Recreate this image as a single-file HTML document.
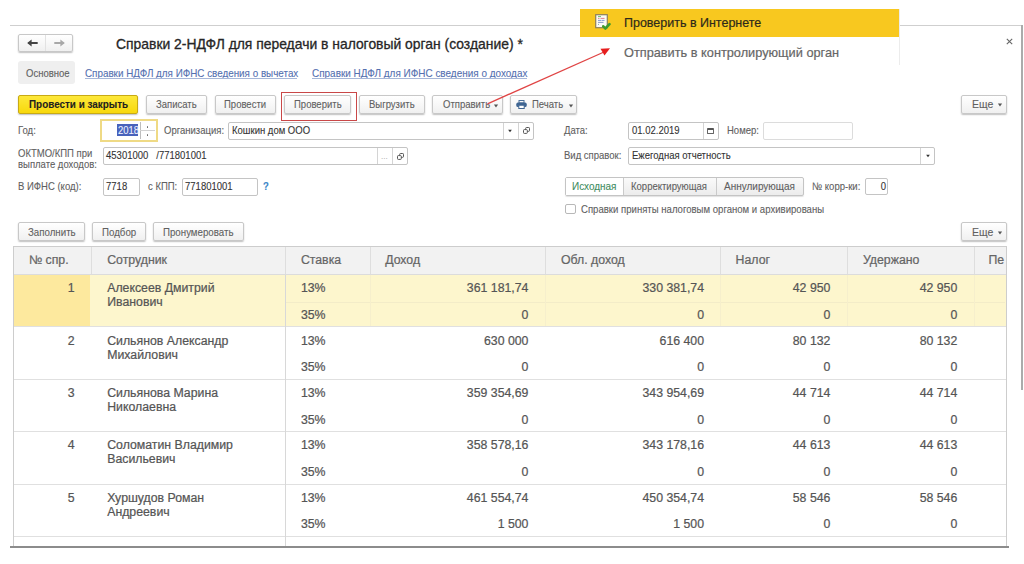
<!DOCTYPE html>
<html><head><meta charset="utf-8">
<style>
*{box-sizing:border-box;margin:0;padding:0}
html,body{width:1024px;height:564px;overflow:hidden;background:#fff}
body{position:relative;font-family:"Liberation Sans",sans-serif;color:#444}
.a{position:absolute}
.t{position:absolute;white-space:nowrap;line-height:1;-webkit-text-stroke:0.1px currentColor}
</style></head><body>

<div class="a" style="left:10.00px;top:25.00px;width:1012.00px;height:1.00px;background:#cfcfcf"></div>
<div class="a" style="left:1021.00px;top:25.00px;width:1.50px;height:365.00px;background:#ababab"></div>
<svg class="a" style="left:1005.5px;top:38px" width="7" height="7" viewBox="0 0 7 7"><path d="M0.8 0.8L6.2 6.2M6.2 0.8L0.8 6.2" stroke="#666" stroke-width="1.1"/></svg>
<div class="a" style="left:18.00px;top:34.30px;width:54.90px;height:17.90px;border:1px solid #c8c8c8;border-radius:2px;background:linear-gradient(#fff,#f0f0f0);box-shadow:0 1px 1.5px rgba(0,0,0,.25);"></div>
<div class="a" style="left:45.20px;top:35.30px;width:1.00px;height:15.70px;background:#e2e2e2"></div>
<svg class="a" style="left:27px;top:39.3px" width="11" height="8" viewBox="0 0 11 8"><path d="M2 4H10" stroke="#444" stroke-width="1.9" stroke-linecap="round"/><path d="M0.2 4L4.6 0.4V7.6Z" fill="#444"/></svg>
<svg class="a" style="left:53.5px;top:39.3px" width="11" height="8" viewBox="0 0 11 8"><path d="M1 4H9" stroke="#a8a8a8" stroke-width="1.9" stroke-linecap="round"/><path d="M10.8 4L6.4 0.4V7.6Z" fill="#a8a8a8"/></svg>
<div class="t" style="left:116.00px;top:37.83px;font-size:13.9px;color:#262626;font-weight:400;-webkit-text-stroke:0.3px #262626">Справки 2-НДФЛ для передачи в налоговый орган (создание) *</div>
<div class="a" style="left:18.10px;top:61.00px;width:57.40px;height:23.20px;background:#efefef;border-radius:3px"></div>
<div class="t" style="left:25.50px;top:67.79px;font-size:11.0px;color:#606060;font-weight:400;transform:scaleX(0.865);transform-origin:0 0;">Основное</div>
<div class="t" style="left:84.70px;top:67.79px;font-size:11.0px;color:#5470b0;font-weight:400;transform:scaleX(0.8950473684210527);transform-origin:0 0;">Справки НДФЛ для ИФНС сведения о вычетах</div>
<div class="a" style="left:84.70px;top:78.20px;width:212.30px;height:1.00px;background:#a6b6d8"></div>
<div class="t" style="left:312.00px;top:67.79px;font-size:11.0px;color:#5470b0;font-weight:400;transform:scaleX(0.9041526315789473);transform-origin:0 0;">Справки НДФЛ для ИФНС сведения о доходах</div>
<div class="a" style="left:312.00px;top:78.20px;width:215.00px;height:1.00px;background:#a6b6d8"></div>
<div class="a" style="left:17.80px;top:95.30px;width:120.30px;height:18.40px;border:1px solid #c8aa14;border-radius:2px;background:linear-gradient(#fde83a,#f8d80c);box-shadow:0 1px 1.5px rgba(0,0,0,.25)"></div>
<div class="t" style="left:28.70px;top:99.29px;font-size:11.0px;color:#1e1e1e;font-weight:700;transform:scaleX(0.8986894736842105);transform-origin:0 0;">Провести и закрыть</div>
<div class="a" style="left:145.50px;top:95.30px;width:61.20px;height:18.40px;border:1px solid #c8c8c8;border-radius:2px;background:linear-gradient(#fff,#f0f0f0);box-shadow:0 1px 1.5px rgba(0,0,0,.25);"></div>
<div class="t" style="left:155.70px;top:99.29px;font-size:11.0px;color:#606060;font-weight:400;transform:scaleX(0.865);transform-origin:0 0;">Записать</div>
<div class="a" style="left:214.50px;top:95.30px;width:61.50px;height:18.40px;border:1px solid #c8c8c8;border-radius:2px;background:linear-gradient(#fff,#f0f0f0);box-shadow:0 1px 1.5px rgba(0,0,0,.25);"></div>
<div class="t" style="left:224.00px;top:99.29px;font-size:11.0px;color:#606060;font-weight:400;transform:scaleX(0.865);transform-origin:0 0;">Провести</div>
<div class="a" style="left:283.70px;top:95.30px;width:67.20px;height:18.40px;border:1px solid #c8c8c8;border-radius:2px;background:linear-gradient(#fff,#f0f0f0);box-shadow:0 1px 1.5px rgba(0,0,0,.25);"></div>
<div class="t" style="left:293.50px;top:99.29px;font-size:11.0px;color:#606060;font-weight:400;transform:scaleX(0.865);transform-origin:0 0;">Проверить</div>
<div class="a" style="left:358.80px;top:95.30px;width:65.90px;height:18.40px;border:1px solid #c8c8c8;border-radius:2px;background:linear-gradient(#fff,#f0f0f0);box-shadow:0 1px 1.5px rgba(0,0,0,.25);"></div>
<div class="t" style="left:368.50px;top:99.29px;font-size:11.0px;color:#606060;font-weight:400;transform:scaleX(0.865);transform-origin:0 0;">Выгрузить</div>
<div class="a" style="left:432.30px;top:95.30px;width:70.30px;height:18.40px;border:1px solid #c8c8c8;border-radius:2px;background:linear-gradient(#fff,#f0f0f0);box-shadow:0 1px 1.5px rgba(0,0,0,.25);"></div>
<div class="t" style="left:443.00px;top:99.29px;font-size:11.0px;color:#606060;font-weight:400;transform:scaleX(0.865);transform-origin:0 0;">Отправить</div>
<svg class="a" style="left:491.50px;top:101.50px" width="8" height="8" viewBox="0 0 8 8"><path d="M1.90 2.60H6.10L4 5.40Z" fill="#555"/></svg>
<div class="a" style="left:510.00px;top:95.30px;width:67.30px;height:18.40px;border:1px solid #c8c8c8;border-radius:2px;background:linear-gradient(#fff,#f0f0f0);box-shadow:0 1px 1.5px rgba(0,0,0,.25);"></div>
<svg class="a" style="left:515.5px;top:100.2px" width="11" height="9" viewBox="0 0 11 9"><rect x="3" y="0.5" width="5" height="2.5" fill="none" stroke="#4a6f99" stroke-width="1"/><rect x="0.3" y="2.6" width="10.4" height="4.4" rx="1.6" fill="#3f6592"/><rect x="2.8" y="5.2" width="5.4" height="3.3" fill="#fff" stroke="#3f6592" stroke-width="1"/></svg>
<div class="t" style="left:532.00px;top:99.29px;font-size:11.0px;color:#606060;font-weight:400;transform:scaleX(0.865);transform-origin:0 0;">Печать</div>
<svg class="a" style="left:566.50px;top:101.50px" width="8" height="8" viewBox="0 0 8 8"><path d="M1.90 2.60H6.10L4 5.40Z" fill="#555"/></svg>
<div class="a" style="left:961.00px;top:95.00px;width:45.80px;height:19.30px;border:1px solid #c8c8c8;border-radius:2px;background:linear-gradient(#fff,#f0f0f0);box-shadow:0 1px 1.5px rgba(0,0,0,.25);"></div>
<div class="t" style="left:972.00px;top:99.29px;font-size:11.0px;color:#606060;font-weight:400;transform:scaleX(0.9515);transform-origin:0 0;">Еще</div>
<svg class="a" style="left:996.00px;top:101.40px" width="8" height="8" viewBox="0 0 8 8"><path d="M1.90 2.60H6.10L4 5.40Z" fill="#555"/></svg>
<div class="a" style="left:280.50px;top:92.00px;width:76.50px;height:29.30px;border:1.5px solid #c94848"></div>
<div class="t" style="left:17.80px;top:125.39px;font-size:11.0px;color:#606060;font-weight:400;transform:scaleX(0.865);transform-origin:0 0;">Год:</div>
<div class="a" style="left:100.00px;top:119.30px;width:58.00px;height:22.70px;border:2px solid #efda85;background:#fff"></div>
<div class="a" style="left:117.30px;top:124.40px;width:20.50px;height:11.70px;background:#4862bb"></div>
<div class="t" style="left:117.60px;top:125.39px;font-size:11.0px;color:#eef0ff;font-weight:400;transform:scaleX(0.86);transform-origin:0 0;">2018</div>
<div class="a" style="left:139.80px;top:122.40px;width:1.00px;height:16.40px;background:#bdbdbd"></div>
<div class="a" style="left:140.30px;top:130.10px;width:14.90px;height:1.00px;background:#d2d2d2"></div>
<div class="a" style="left:146.70px;top:125.90px;width:1.70px;height:1.70px;background:#666;border-radius:1px"></div>
<div class="a" style="left:146.70px;top:134.10px;width:1.70px;height:1.70px;background:#666;border-radius:1px"></div>
<div class="t" style="left:164.00px;top:125.39px;font-size:11.0px;color:#606060;font-weight:400;transform:scaleX(0.865);transform-origin:0 0;">Организация:</div>
<div class="a" style="left:228.00px;top:121.70px;width:306.40px;height:17.90px;border:1px solid #c4c4c4;border-radius:2px;background:#fff;"></div>
<div class="a" style="left:502.60px;top:122.80px;width:1.00px;height:16.20px;background:#d4d4d4"></div>
<div class="a" style="left:518.20px;top:122.80px;width:1.00px;height:16.20px;background:#d4d4d4"></div>
<div class="t" style="left:231.50px;top:125.39px;font-size:11.0px;color:#333;font-weight:400;transform:scaleX(0.865);transform-origin:0 0;">Кошкин дом ООО</div>
<svg class="a" style="left:506.20px;top:126.80px" width="8" height="8" viewBox="0 0 8 8"><path d="M2.10 2.70H5.90L4 5.30Z" fill="#333"/></svg>
<svg class="a" style="left:523.2px;top:127.4px" width="7" height="7" viewBox="0 0 7 7"><rect x="2.7" y="0.5" width="3.8" height="3.8" rx="0.8" fill="none" stroke="#555" stroke-width="1"/><rect x="0.5" y="2.6" width="3.8" height="3.8" rx="0.8" fill="#fff" stroke="#555" stroke-width="1"/></svg>
<div class="t" style="left:17.80px;top:148.29px;font-size:11.0px;color:#606060;font-weight:400;transform:scaleX(0.865);transform-origin:0 0;">ОКТМО/КПП при</div>
<div class="t" style="left:17.80px;top:159.09px;font-size:11.0px;color:#606060;font-weight:400;transform:scaleX(0.865);transform-origin:0 0;">выплате доходов:</div>
<div class="a" style="left:102.50px;top:147.20px;width:305.90px;height:17.60px;border:1px solid #c4c4c4;border-radius:2px;background:#fff;"></div>
<div class="a" style="left:376.60px;top:148.20px;width:1.00px;height:15.60px;background:#d4d4d4"></div>
<div class="a" style="left:392.20px;top:148.20px;width:1.00px;height:15.60px;background:#d4d4d4"></div>
<div class="t" style="left:105.50px;top:150.39px;font-size:11.0px;color:#333;font-weight:400;transform:scaleX(0.865);transform-origin:0 0;">45301000&nbsp;&nbsp;&nbsp;/771801001</div>
<div class="t" style="left:381.00px;top:152.53px;font-size:8px;color:#aaa;font-weight:400;">...</div>
<svg class="a" style="left:397.3px;top:152.6px" width="7" height="7" viewBox="0 0 7 7"><rect x="2.7" y="0.5" width="3.8" height="3.8" rx="0.8" fill="none" stroke="#555" stroke-width="1"/><rect x="0.5" y="2.6" width="3.8" height="3.8" rx="0.8" fill="#fff" stroke="#555" stroke-width="1"/></svg>
<div class="t" style="left:17.80px;top:180.79px;font-size:11.0px;color:#606060;font-weight:400;transform:scaleX(0.865);transform-origin:0 0;">В ИФНС (код):</div>
<div class="a" style="left:102.50px;top:177.50px;width:37.50px;height:18.00px;border:1px solid #c4c4c4;border-radius:2px;background:#fff;"></div>
<div class="t" style="left:105.50px;top:180.79px;font-size:11.0px;color:#333;font-weight:400;transform:scaleX(0.865);transform-origin:0 0;">7718</div>
<div class="t" style="left:148.00px;top:180.79px;font-size:11.0px;color:#606060;font-weight:400;transform:scaleX(0.865);transform-origin:0 0;">с КПП:</div>
<div class="a" style="left:182.00px;top:177.50px;width:75.80px;height:18.00px;border:1px solid #c4c4c4;border-radius:2px;background:#fff;"></div>
<div class="t" style="left:185.30px;top:180.79px;font-size:11.0px;color:#333;font-weight:400;transform:scaleX(0.865);transform-origin:0 0;">771801001</div>
<div class="t" style="left:262.50px;top:180.79px;font-size:11.0px;color:#3a86c8;font-weight:700;transform:scaleX(0.865);transform-origin:0 0;">?</div>
<div class="t" style="left:564.40px;top:125.39px;font-size:11.0px;color:#606060;font-weight:400;transform:scaleX(0.865);transform-origin:0 0;">Дата:</div>
<div class="a" style="left:628.20px;top:121.80px;width:90.50px;height:18.20px;border:1px solid #c4c4c4;border-radius:2px;background:#fff;"></div>
<div class="a" style="left:703.40px;top:122.80px;width:1.00px;height:16.20px;background:#d4d4d4"></div>
<div class="t" style="left:631.50px;top:125.39px;font-size:11.0px;color:#333;font-weight:400;transform:scaleX(0.865);transform-origin:0 0;">01.02.2019</div>
<div class="a" style="left:707.40px;top:128.20px;width:7.00px;height:6.00px;border:1px solid #666;border-top:2px solid #555;border-radius:1px"></div>
<div class="t" style="left:726.90px;top:125.39px;font-size:11.0px;color:#606060;font-weight:400;transform:scaleX(0.865);transform-origin:0 0;">Номер:</div>
<div class="a" style="left:762.70px;top:121.60px;width:90.20px;height:18.00px;border:1px solid #c4c4c4;border-radius:2px;background:#fff;border-color:#dcdcdc"></div>
<div class="t" style="left:564.40px;top:150.09px;font-size:11.0px;color:#606060;font-weight:400;transform:scaleX(0.865);transform-origin:0 0;">Вид справок:</div>
<div class="a" style="left:628.20px;top:147.00px;width:306.80px;height:18.20px;border:1px solid #c4c4c4;border-radius:2px;background:#fff;"></div>
<div class="a" style="left:920.40px;top:148.00px;width:1.00px;height:16.20px;background:#d4d4d4"></div>
<div class="t" style="left:631.50px;top:150.09px;font-size:11.0px;color:#333;font-weight:400;transform:scaleX(0.865);transform-origin:0 0;">Ежегодная отчетность</div>
<svg class="a" style="left:923.70px;top:152.00px" width="8" height="8" viewBox="0 0 8 8"><path d="M2.10 2.70H5.90L4 5.30Z" fill="#333"/></svg>
<div class="a" style="left:564.50px;top:177.40px;width:239.40px;height:18.90px;border:1px solid #c4c4c4;border-radius:2px;background:linear-gradient(#fafafa,#ececec);box-shadow:0 1px 1px rgba(0,0,0,.12)"></div>
<div class="a" style="left:565.50px;top:178.40px;width:57.80px;height:16.90px;background:#fff"></div>
<div class="a" style="left:623.30px;top:178.40px;width:1.00px;height:16.90px;background:#cacaca"></div>
<div class="a" style="left:716.00px;top:178.40px;width:1.00px;height:16.90px;background:#cacaca"></div>
<div class="t" style="left:571.70px;top:180.89px;font-size:11.0px;color:#3e8c5e;font-weight:400;transform:scaleX(0.9032421052631578);transform-origin:0 0;">Исходная</div>
<div class="t" style="left:630.50px;top:180.89px;font-size:11.0px;color:#606060;font-weight:400;transform:scaleX(0.865);transform-origin:0 0;">Корректирующая</div>
<div class="t" style="left:724.20px;top:180.89px;font-size:11.0px;color:#606060;font-weight:400;transform:scaleX(0.90825);transform-origin:0 0;">Аннулирующая</div>
<div class="t" style="left:812.30px;top:180.89px;font-size:11.0px;color:#606060;font-weight:400;transform:scaleX(0.865);transform-origin:0 0;">№ корр-ки:</div>
<div class="a" style="left:865.00px;top:177.80px;width:23.00px;height:17.60px;border:1px solid #c4c4c4;border-radius:2px;background:#fff;"></div>
<div class="t" style="right:138.00px;top:180.89px;font-size:11.0px;color:#333;font-weight:400;transform:scaleX(0.865);transform-origin:100% 0;">0</div>
<div class="a" style="left:565.20px;top:203.60px;width:11.30px;height:10.90px;border:1px solid #b8b8b8;border-radius:2px;background:#fff"></div>
<div class="t" style="left:581.40px;top:203.69px;font-size:11.0px;color:#606060;font-weight:400;transform:scaleX(0.8704631578947369);transform-origin:0 0;">Справки приняты налоговым органом и архивированы</div>
<div class="a" style="left:18.30px;top:222.30px;width:66.50px;height:19.20px;border:1px solid #c8c8c8;border-radius:2px;background:linear-gradient(#fff,#f0f0f0);box-shadow:0 1px 1.5px rgba(0,0,0,.25);"></div>
<div class="t" style="left:28.40px;top:227.29px;font-size:11.0px;color:#606060;font-weight:400;transform:scaleX(0.8823);transform-origin:0 0;">Заполнить</div>
<div class="a" style="left:92.00px;top:222.30px;width:54.30px;height:19.20px;border:1px solid #c8c8c8;border-radius:2px;background:linear-gradient(#fff,#f0f0f0);box-shadow:0 1px 1.5px rgba(0,0,0,.25);"></div>
<div class="t" style="left:101.80px;top:227.29px;font-size:11.0px;color:#606060;font-weight:400;transform:scaleX(0.8823);transform-origin:0 0;">Подбор</div>
<div class="a" style="left:153.30px;top:222.30px;width:90.70px;height:19.20px;border:1px solid #c8c8c8;border-radius:2px;background:linear-gradient(#fff,#f0f0f0);box-shadow:0 1px 1.5px rgba(0,0,0,.25);"></div>
<div class="t" style="left:163.20px;top:227.29px;font-size:11.0px;color:#606060;font-weight:400;transform:scaleX(0.8823);transform-origin:0 0;">Пронумеровать</div>
<div class="a" style="left:961.00px;top:222.30px;width:45.80px;height:19.00px;border:1px solid #c8c8c8;border-radius:2px;background:linear-gradient(#fff,#f0f0f0);box-shadow:0 1px 1.5px rgba(0,0,0,.25);"></div>
<div class="t" style="left:972.00px;top:227.29px;font-size:11.0px;color:#606060;font-weight:400;transform:scaleX(0.9515);transform-origin:0 0;">Еще</div>
<svg class="a" style="left:996.00px;top:228.60px" width="8" height="8" viewBox="0 0 8 8"><path d="M1.90 2.60H6.10L4 5.40Z" fill="#555"/></svg>
<div class="a" style="left:13.00px;top:246.00px;width:993.50px;height:300.50px;border:1px solid #cdcdcd;border-bottom:none"></div>
<div class="a" style="left:14.00px;top:247.00px;width:991.50px;height:27.50px;background:#f2f2f2;border-bottom:1px solid #dcdcdc"></div>
<div class="a" style="left:90.50px;top:247.00px;width:1.00px;height:26.50px;background:#dedede"></div>
<div class="a" style="left:284.60px;top:247.00px;width:1.00px;height:26.50px;background:#dedede"></div>
<div class="a" style="left:370.00px;top:247.00px;width:1.00px;height:26.50px;background:#dedede"></div>
<div class="a" style="left:545.20px;top:247.00px;width:1.00px;height:26.50px;background:#dedede"></div>
<div class="a" style="left:719.70px;top:247.00px;width:1.00px;height:26.50px;background:#dedede"></div>
<div class="a" style="left:847.00px;top:247.00px;width:1.00px;height:26.50px;background:#dedede"></div>
<div class="a" style="left:973.50px;top:247.00px;width:1.00px;height:26.50px;background:#dedede"></div>
<div class="t" style="left:28.90px;top:254.39px;font-size:12.3px;color:#656565;font-weight:400;-webkit-text-stroke:0.22px #656565">№ спр.</div>
<div class="t" style="left:107.20px;top:254.39px;font-size:12.3px;color:#656565;font-weight:400;-webkit-text-stroke:0.22px #656565">Сотрудник</div>
<div class="t" style="left:300.90px;top:254.39px;font-size:12.3px;color:#656565;font-weight:400;-webkit-text-stroke:0.22px #656565">Ставка</div>
<div class="t" style="left:385.20px;top:254.39px;font-size:12.3px;color:#656565;font-weight:400;-webkit-text-stroke:0.22px #656565">Доход</div>
<div class="t" style="left:561.00px;top:254.39px;font-size:12.3px;color:#656565;font-weight:400;-webkit-text-stroke:0.22px #656565">Обл. доход</div>
<div class="t" style="left:735.60px;top:254.39px;font-size:12.3px;color:#656565;font-weight:400;-webkit-text-stroke:0.22px #656565">Налог</div>
<div class="t" style="left:863.00px;top:254.39px;font-size:12.3px;color:#656565;font-weight:400;-webkit-text-stroke:0.22px #656565">Удержано</div>
<div class="t" style="left:988.50px;top:254.39px;font-size:12.3px;color:#656565;font-weight:400;-webkit-text-stroke:0.22px #656565">Пе</div>
<div class="a" style="left:14.00px;top:275.30px;width:991.50px;height:51.15px;background:#fdf6cd"></div>
<div class="a" style="left:14.00px;top:275.30px;width:76.00px;height:51.15px;background:#fde99e"></div>
<div class="a" style="left:14.00px;top:326.45px;width:991.50px;height:1.00px;background:#e0e0e0"></div>
<div class="a" style="left:285.60px;top:301.50px;width:719.90px;height:1.00px;background:#f3ecc8"></div>
<div class="a" style="left:370.00px;top:274.50px;width:1.00px;height:51.35px;background:#f6efcc"></div>
<div class="a" style="left:545.20px;top:274.50px;width:1.00px;height:51.35px;background:#f6efcc"></div>
<div class="a" style="left:719.70px;top:274.50px;width:1.00px;height:51.35px;background:#f6efcc"></div>
<div class="a" style="left:847.00px;top:274.50px;width:1.00px;height:51.35px;background:#f6efcc"></div>
<div class="a" style="left:973.50px;top:274.50px;width:1.00px;height:51.35px;background:#f6efcc"></div>
<div class="t" style="right:949.40px;top:282.39px;font-size:12.3px;color:#555;font-weight:400;-webkit-text-stroke:0.22px #555">1</div>
<div class="t" style="left:107.20px;top:282.39px;font-size:12.3px;color:#555;font-weight:400;-webkit-text-stroke:0.22px #555">Алексеев Дмитрий</div>
<div class="t" style="left:107.20px;top:296.39px;font-size:12.3px;color:#555;font-weight:400;-webkit-text-stroke:0.22px #555">Иванович</div>
<div class="t" style="left:300.90px;top:282.39px;font-size:12.3px;color:#555;font-weight:400;-webkit-text-stroke:0.22px #555">13%</div>
<div class="t" style="left:300.90px;top:308.99px;font-size:12.3px;color:#555;font-weight:400;-webkit-text-stroke:0.22px #555">35%</div>
<div class="t" style="right:495.60px;top:282.39px;font-size:12.3px;color:#555;font-weight:400;-webkit-text-stroke:0.22px #555">361 181,74</div>
<div class="t" style="right:495.60px;top:308.99px;font-size:12.3px;color:#555;font-weight:400;-webkit-text-stroke:0.22px #555">0</div>
<div class="t" style="right:320.00px;top:282.39px;font-size:12.3px;color:#555;font-weight:400;-webkit-text-stroke:0.22px #555">330 381,74</div>
<div class="t" style="right:320.00px;top:308.99px;font-size:12.3px;color:#555;font-weight:400;-webkit-text-stroke:0.22px #555">0</div>
<div class="t" style="right:193.60px;top:282.39px;font-size:12.3px;color:#555;font-weight:400;-webkit-text-stroke:0.22px #555">42 950</div>
<div class="t" style="right:193.60px;top:308.99px;font-size:12.3px;color:#555;font-weight:400;-webkit-text-stroke:0.22px #555">0</div>
<div class="t" style="right:66.70px;top:282.39px;font-size:12.3px;color:#555;font-weight:400;-webkit-text-stroke:0.22px #555">42 950</div>
<div class="t" style="right:66.70px;top:308.99px;font-size:12.3px;color:#555;font-weight:400;-webkit-text-stroke:0.22px #555">0</div>
<div class="a" style="left:14.00px;top:378.80px;width:991.50px;height:1.00px;background:#e0e0e0"></div>
<div class="t" style="right:949.40px;top:334.74px;font-size:12.3px;color:#555;font-weight:400;-webkit-text-stroke:0.22px #555">2</div>
<div class="t" style="left:107.20px;top:334.74px;font-size:12.3px;color:#555;font-weight:400;-webkit-text-stroke:0.22px #555">Сильянов Александр</div>
<div class="t" style="left:107.20px;top:348.74px;font-size:12.3px;color:#555;font-weight:400;-webkit-text-stroke:0.22px #555">Михайлович</div>
<div class="t" style="left:300.90px;top:334.74px;font-size:12.3px;color:#555;font-weight:400;-webkit-text-stroke:0.22px #555">13%</div>
<div class="t" style="left:300.90px;top:361.34px;font-size:12.3px;color:#555;font-weight:400;-webkit-text-stroke:0.22px #555">35%</div>
<div class="t" style="right:495.60px;top:334.74px;font-size:12.3px;color:#555;font-weight:400;-webkit-text-stroke:0.22px #555">630 000</div>
<div class="t" style="right:495.60px;top:361.34px;font-size:12.3px;color:#555;font-weight:400;-webkit-text-stroke:0.22px #555">0</div>
<div class="t" style="right:320.00px;top:334.74px;font-size:12.3px;color:#555;font-weight:400;-webkit-text-stroke:0.22px #555">616 400</div>
<div class="t" style="right:320.00px;top:361.34px;font-size:12.3px;color:#555;font-weight:400;-webkit-text-stroke:0.22px #555">0</div>
<div class="t" style="right:193.60px;top:334.74px;font-size:12.3px;color:#555;font-weight:400;-webkit-text-stroke:0.22px #555">80 132</div>
<div class="t" style="right:193.60px;top:361.34px;font-size:12.3px;color:#555;font-weight:400;-webkit-text-stroke:0.22px #555">0</div>
<div class="t" style="right:66.70px;top:334.74px;font-size:12.3px;color:#555;font-weight:400;-webkit-text-stroke:0.22px #555">80 132</div>
<div class="t" style="right:66.70px;top:361.34px;font-size:12.3px;color:#555;font-weight:400;-webkit-text-stroke:0.22px #555">0</div>
<div class="a" style="left:14.00px;top:431.15px;width:991.50px;height:1.00px;background:#e0e0e0"></div>
<div class="t" style="right:949.40px;top:387.09px;font-size:12.3px;color:#555;font-weight:400;-webkit-text-stroke:0.22px #555">3</div>
<div class="t" style="left:107.20px;top:387.09px;font-size:12.3px;color:#555;font-weight:400;-webkit-text-stroke:0.22px #555">Сильянова Марина</div>
<div class="t" style="left:107.20px;top:401.09px;font-size:12.3px;color:#555;font-weight:400;-webkit-text-stroke:0.22px #555">Николаевна</div>
<div class="t" style="left:300.90px;top:387.09px;font-size:12.3px;color:#555;font-weight:400;-webkit-text-stroke:0.22px #555">13%</div>
<div class="t" style="left:300.90px;top:413.69px;font-size:12.3px;color:#555;font-weight:400;-webkit-text-stroke:0.22px #555">35%</div>
<div class="t" style="right:495.60px;top:387.09px;font-size:12.3px;color:#555;font-weight:400;-webkit-text-stroke:0.22px #555">359 354,69</div>
<div class="t" style="right:495.60px;top:413.69px;font-size:12.3px;color:#555;font-weight:400;-webkit-text-stroke:0.22px #555">0</div>
<div class="t" style="right:320.00px;top:387.09px;font-size:12.3px;color:#555;font-weight:400;-webkit-text-stroke:0.22px #555">343 954,69</div>
<div class="t" style="right:320.00px;top:413.69px;font-size:12.3px;color:#555;font-weight:400;-webkit-text-stroke:0.22px #555">0</div>
<div class="t" style="right:193.60px;top:387.09px;font-size:12.3px;color:#555;font-weight:400;-webkit-text-stroke:0.22px #555">44 714</div>
<div class="t" style="right:193.60px;top:413.69px;font-size:12.3px;color:#555;font-weight:400;-webkit-text-stroke:0.22px #555">0</div>
<div class="t" style="right:66.70px;top:387.09px;font-size:12.3px;color:#555;font-weight:400;-webkit-text-stroke:0.22px #555">44 714</div>
<div class="t" style="right:66.70px;top:413.69px;font-size:12.3px;color:#555;font-weight:400;-webkit-text-stroke:0.22px #555">0</div>
<div class="a" style="left:14.00px;top:483.50px;width:991.50px;height:1.00px;background:#e0e0e0"></div>
<div class="t" style="right:949.40px;top:439.44px;font-size:12.3px;color:#555;font-weight:400;-webkit-text-stroke:0.22px #555">4</div>
<div class="t" style="left:107.20px;top:439.44px;font-size:12.3px;color:#555;font-weight:400;-webkit-text-stroke:0.22px #555">Соломатин Владимир</div>
<div class="t" style="left:107.20px;top:453.44px;font-size:12.3px;color:#555;font-weight:400;-webkit-text-stroke:0.22px #555">Васильевич</div>
<div class="t" style="left:300.90px;top:439.44px;font-size:12.3px;color:#555;font-weight:400;-webkit-text-stroke:0.22px #555">13%</div>
<div class="t" style="left:300.90px;top:466.04px;font-size:12.3px;color:#555;font-weight:400;-webkit-text-stroke:0.22px #555">35%</div>
<div class="t" style="right:495.60px;top:439.44px;font-size:12.3px;color:#555;font-weight:400;-webkit-text-stroke:0.22px #555">358 578,16</div>
<div class="t" style="right:495.60px;top:466.04px;font-size:12.3px;color:#555;font-weight:400;-webkit-text-stroke:0.22px #555">0</div>
<div class="t" style="right:320.00px;top:439.44px;font-size:12.3px;color:#555;font-weight:400;-webkit-text-stroke:0.22px #555">343 178,16</div>
<div class="t" style="right:320.00px;top:466.04px;font-size:12.3px;color:#555;font-weight:400;-webkit-text-stroke:0.22px #555">0</div>
<div class="t" style="right:193.60px;top:439.44px;font-size:12.3px;color:#555;font-weight:400;-webkit-text-stroke:0.22px #555">44 613</div>
<div class="t" style="right:193.60px;top:466.04px;font-size:12.3px;color:#555;font-weight:400;-webkit-text-stroke:0.22px #555">0</div>
<div class="t" style="right:66.70px;top:439.44px;font-size:12.3px;color:#555;font-weight:400;-webkit-text-stroke:0.22px #555">44 613</div>
<div class="t" style="right:66.70px;top:466.04px;font-size:12.3px;color:#555;font-weight:400;-webkit-text-stroke:0.22px #555">0</div>
<div class="a" style="left:14.00px;top:535.85px;width:991.50px;height:1.00px;background:#e0e0e0"></div>
<div class="t" style="right:949.40px;top:491.79px;font-size:12.3px;color:#555;font-weight:400;-webkit-text-stroke:0.22px #555">5</div>
<div class="t" style="left:107.20px;top:491.79px;font-size:12.3px;color:#555;font-weight:400;-webkit-text-stroke:0.22px #555">Хуршудов Роман</div>
<div class="t" style="left:107.20px;top:505.79px;font-size:12.3px;color:#555;font-weight:400;-webkit-text-stroke:0.22px #555">Андреевич</div>
<div class="t" style="left:300.90px;top:491.79px;font-size:12.3px;color:#555;font-weight:400;-webkit-text-stroke:0.22px #555">13%</div>
<div class="t" style="left:300.90px;top:518.39px;font-size:12.3px;color:#555;font-weight:400;-webkit-text-stroke:0.22px #555">35%</div>
<div class="t" style="right:495.60px;top:491.79px;font-size:12.3px;color:#555;font-weight:400;-webkit-text-stroke:0.22px #555">461 554,74</div>
<div class="t" style="right:495.60px;top:518.39px;font-size:12.3px;color:#555;font-weight:400;-webkit-text-stroke:0.22px #555">1 500</div>
<div class="t" style="right:320.00px;top:491.79px;font-size:12.3px;color:#555;font-weight:400;-webkit-text-stroke:0.22px #555">450 354,74</div>
<div class="t" style="right:320.00px;top:518.39px;font-size:12.3px;color:#555;font-weight:400;-webkit-text-stroke:0.22px #555">1 500</div>
<div class="t" style="right:193.60px;top:491.79px;font-size:12.3px;color:#555;font-weight:400;-webkit-text-stroke:0.22px #555">58 546</div>
<div class="t" style="right:193.60px;top:518.39px;font-size:12.3px;color:#555;font-weight:400;-webkit-text-stroke:0.22px #555">0</div>
<div class="t" style="right:66.70px;top:491.79px;font-size:12.3px;color:#555;font-weight:400;-webkit-text-stroke:0.22px #555">58 546</div>
<div class="t" style="right:66.70px;top:518.39px;font-size:12.3px;color:#555;font-weight:400;-webkit-text-stroke:0.22px #555">0</div>
<div class="a" style="left:284.60px;top:274.50px;width:1.00px;height:272.00px;background:#d8d8d8"></div>
<div class="a" style="left:10.00px;top:545.80px;width:999.00px;height:2.00px;background:#8c8c8c"></div>
<div class="a" style="left:580.00px;top:8.60px;width:319.50px;height:56.90px;background:#fff;border-right:1px solid #ececec"></div>
<div class="a" style="left:580.00px;top:8.60px;width:319.00px;height:28.60px;background:#f8c81f"></div>
<svg class="a" style="left:594.8px;top:14px" width="16" height="17" viewBox="0 0 16 17"><rect x="0.7" y="0.7" width="11.6" height="13" fill="#fbfbf6" stroke="#8c7f5a" stroke-width="1.2"/><path d="M3 2.6h3" stroke="#5cb85c" stroke-width="0.9"/><path d="M3 4.4h1.5M5.5 4.4h4" stroke="#e07080" stroke-width="0.9"/><path d="M3 6.4h3M6.5 6.4h3" stroke="#7090d0" stroke-width="0.9"/><path d="M3 8.4h5.5" stroke="#8090c0" stroke-width="0.9"/><path d="M3 10.4h1" stroke="#7a9" stroke-width="0.9"/><path d="M8.3 12.3l2 2.2l4.2-4.4" stroke="#3e9c2c" stroke-width="2.6" stroke-linecap="round" stroke-linejoin="round" fill="none"/></svg>
<div class="t" style="left:624.00px;top:16.83px;font-size:12.49px;color:#2e2a1a;font-weight:400;-webkit-text-stroke:0.2px #2e2a1a">Проверить в Интернете</div>
<div class="t" style="left:624.00px;top:46.81px;font-size:12.75px;color:#666;font-weight:400;-webkit-text-stroke:0.2px #666">Отправить в контролирующий орган</div>
<svg class="a" style="left:0;top:0" width="1024" height="564"><path d="M487.5 103.8L604 52" stroke="#e04444" stroke-width="1.3" fill="none"/><path d="M610 48.2L600.5 48.8L604.5 55.5Z" fill="#e61e1e"/></svg>
</body></html>
